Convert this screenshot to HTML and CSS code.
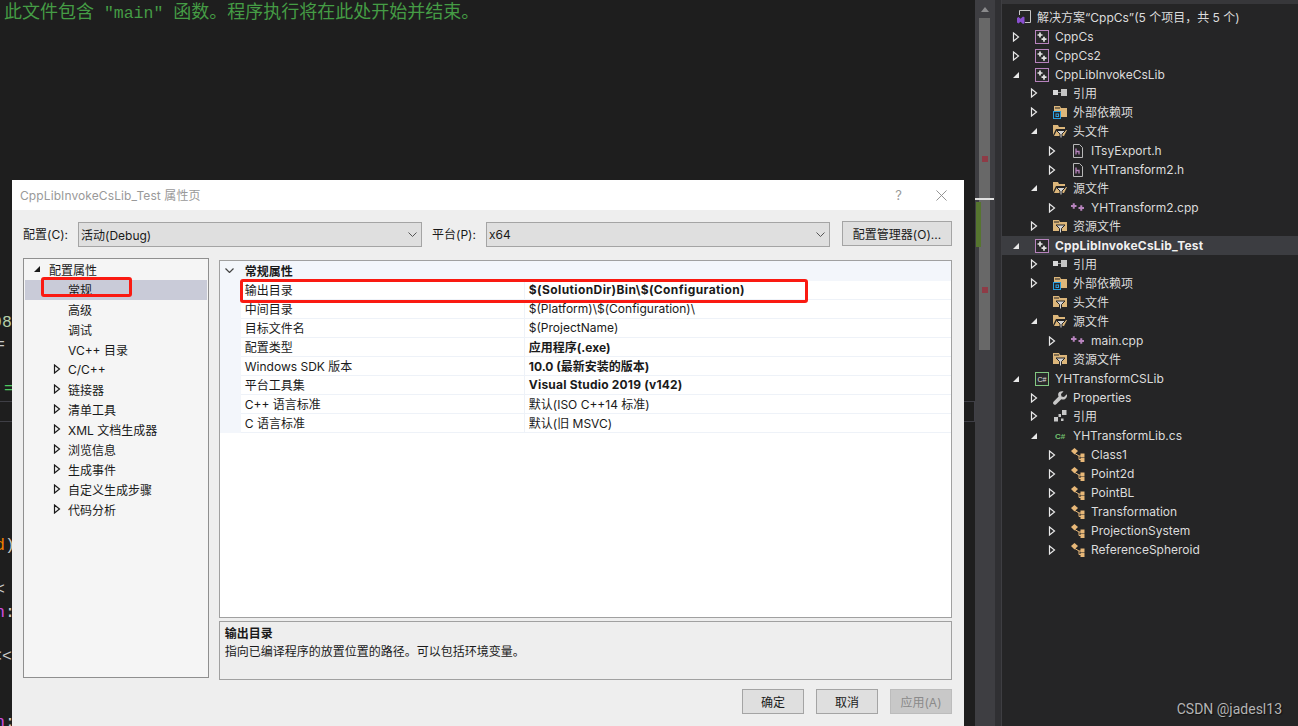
FILE: index.html
```html
<!DOCTYPE html>
<html lang="zh-CN">
<head>
  <meta charset="UTF-8" />
  <title>CppLibInvokeCsLib_Test 属性页</title>
  <link rel="stylesheet" href="styles.css">
</head>
<body>
  <svg class="sprites">
    <symbol id="open" viewBox="0 0 8 10"><path d="M1.5 1v8L6.5 5z" fill="none" stroke="currentColor" stroke-width="1.2"/></symbol>
    <symbol id="shut" viewBox="0 0 8 10"><path d="M7 2v6H1z" fill="currentColor"/></symbol>
    <symbol id="sol" viewBox="0 0 14 14"><path d="M2.5 5V.5h11v12H8" fill="none" stroke="#c8c8c8"/><path d="M0 8l1.5-1 2 1.8L6 6.5 7.5 7.2v6L6 14l-2.500-2.300L1.500 13.500 0 12.500z" fill="#8a4fd0"/></symbol>
    <symbol id="proj" viewBox="0 0 14 14"><rect x=".5" y=".5" width="13" height="13" fill="#2a2a2b" stroke="#b783bd"/><path d="M2.500 5h5M5 2.500v5M6.500 9.200h5M9 6.700v5" stroke="#e4e4e4" stroke-width="1.700"/></symbol>
    <symbol id="ref" viewBox="0 0 14 14"><rect y="4" width="5" height="5" fill="#d8d8d8"/><path d="M5 6.500h3" stroke="#999"/><rect x="8" y="3" width="6" height="7" fill="#c4c4c4"/></symbol>
    <symbol id="dep" viewBox="0 0 14 14"><path d="M1 1h6l1 2h6v9H1z" fill="#dcb67a"/><path d="M2 3h5" stroke="#252526"/><rect x=".5" y="6.500" width="7" height="7" fill="#252526" stroke="#2b9fe0"/><rect x="3" y="9" width="2.500" height="2.500" fill="none" stroke="#2b9fe0"/></symbol>
    <symbol id="filter" viewBox="0 0 14 14"><path d="M0 1h6l1 2h7v9H0z" fill="#dcb67a"/><path d="M1 3h5" stroke="#252526"/><path d="M3 6h9L8.500 9.500V14h-2V9.500z" fill="#d4d4d4" stroke="#252526"/></symbol>
    <symbol id="filter-open" viewBox="0 0 14 14"><path d="M0 1h5l1 2h6v2H3L0 11z" fill="#dcb67a"/><path d="M1 12l3-6h10l-3 6z" fill="#dcb67a"/><path d="M3.500 6.500h9L9 10v4H7v-4z" fill="#d4d4d4" stroke="#252526"/></symbol>
    <symbol id="hfile" viewBox="0 0 14 14"><path d="M2.500.5h6l3 3v10h-9z" fill="none" stroke="#b8b8b8"/><path d="M5 4.500v6M5 7.500h3v3" fill="none" stroke="#b783bd" stroke-width="1.300"/></symbol>
    <symbol id="cpp" viewBox="0 0 14 14"><path d="M0 5h5.500M2.750 2.200v5.600M7.500 7h5.500M10.250 4.200v5.600" stroke="#b783bd" stroke-width="2"/></symbol>
    <symbol id="csproj" viewBox="0 0 14 14"><rect x=".5" y=".5" width="13" height="13" fill="#2a2a2b" stroke="#82c882"/><text x="7" y="10" text-anchor="middle" class="sharp" fill="#e0e0e0">C#</text></symbol>
    <symbol id="wrench" viewBox="0 0 14 14"><path d="M13.500 3.500L11 6 8.500 5.500 8 3l2.500-2.500C8.500-.2 6 .5 5.300 2.600 5 3.700 5.200 4.800 5.600 5.600L.5 10.700c-.8 1-.5 2 .2 2.600.7.700 1.600.8 2.500 0l5.100-5.100c1 .4 2.100.5 3 .2 2-.7 3-2.700 2.700-4.900z" fill="#c8c8c8"/></symbol>
    <symbol id="refs" viewBox="0 0 14 14"><path d="M9 1h4.500v5H9zM5.500 5H8v3H5.500zM1 8h4v4.500H1zM8 9.500h2.500V12H8z" fill="#c8c8c8"/></symbol>
    <symbol id="csfile" viewBox="0 0 14 14"><text x="7" y="10" text-anchor="middle" class="sharp bold" fill="#73c06f">C#</text></symbol>
    <symbol id="cls" viewBox="0 0 14 14"><path d="M3.500 0L7 3 3.500 6.500 0 3z" fill="#e8b878"/><path d="M3 5l5 3h2M8 8v3.500h2" fill="none" stroke="#e8b878"/><rect x="9.500" y="5.500" width="4" height="4" fill="#e8b878"/><rect x="9.500" y="10" width="4" height="4" fill="#e8b878"/></symbol>
  </svg>

  <div class="editor">
    <div class="pane pane-top">
      <div class="line comment"><span class="cjk">此文件包含</span> "main" <span class="cjk">函数。程序执行将在此处开始并结束。</span></div>
      <div class="line"></div><div class="line"></div><div class="line"></div><div class="line"></div>
      <div class="line"></div><div class="line"></div><div class="line"></div><div class="line"></div><div class="line"></div>
      <div class="line"></div><div class="line"></div><div class="line"></div><div class="line"></div>
      <div class="line num"><span class="cut">98</span></div>
      <div class="line plain"><span class="cut-half">=</span></div>
      <div class="line"></div>
      <div class="line green"><span class="nudge">=</span></div>
    </div>
    <div class="pane-split"></div>
    <div class="pane pane-bottom">
      <div class="line"></div><div class="line"></div><div class="line"></div><div class="line"></div><div class="line"></div>
      <div class="line"><span class="cut-half orange">d</span><span class="plain">)</span></div>
      <div class="line"></div>
      <div class="line plain"><span class="cut-half">&lt;</span></div>
      <div class="line"><span class="cut-half magenta">n</span><span class="plain">:</span></div>
      <div class="line"></div>
      <div class="line plain"><span class="cut">&lt;&lt;</span></div>
      <div class="line"></div><div class="line"></div>
      <div class="line"><span class="cut-half magenta">n</span><span class="plain">:</span></div>
    </div>
  </div>

  <div class="scrollbar">
    <div class="scroll-up"></div>
    <div class="scroll-thumb"></div>
    <div class="mark-line"></div>
    <div class="mark-green"></div>
    <div class="mark-red mark-a"></div>
    <div class="mark-red mark-b"></div>
  </div>
  <div class="sash"></div>

  <div class="explorer">
    <div class="row cn"><svg class="ic ic-sol"><use href="#sol"/></svg>解决方案“CppCs”(5 个项目，共 5 个)</div>
    <div class="row lv0"><svg class="exp"><use href="#open"/></svg><svg class="ic"><use href="#proj"/></svg>CppCs</div>
    <div class="row lv0"><svg class="exp"><use href="#open"/></svg><svg class="ic"><use href="#proj"/></svg>CppCs2</div>
    <div class="row lv0"><svg class="exp"><use href="#shut"/></svg><svg class="ic"><use href="#proj"/></svg>CppLibInvokeCsLib</div>
    <div class="row lv1 cn"><svg class="exp"><use href="#open"/></svg><svg class="ic"><use href="#ref"/></svg>引用</div>
    <div class="row lv1 cn"><svg class="exp"><use href="#open"/></svg><svg class="ic"><use href="#dep"/></svg>外部依赖项</div>
    <div class="row lv1 cn"><svg class="exp"><use href="#shut"/></svg><svg class="ic"><use href="#filter-open"/></svg>头文件</div>
    <div class="row lv2"><svg class="exp"><use href="#open"/></svg><svg class="ic"><use href="#hfile"/></svg>ITsyExport.h</div>
    <div class="row lv2"><svg class="exp"><use href="#open"/></svg><svg class="ic"><use href="#hfile"/></svg>YHTransform2.h</div>
    <div class="row lv1 cn"><svg class="exp"><use href="#shut"/></svg><svg class="ic"><use href="#filter-open"/></svg>源文件</div>
    <div class="row lv2"><svg class="exp"><use href="#open"/></svg><svg class="ic"><use href="#cpp"/></svg>YHTransform2.cpp</div>
    <div class="row lv1 cn"><svg class="exp"><use href="#open"/></svg><svg class="ic"><use href="#filter"/></svg>资源文件</div>
    <div class="row lv0 active"><svg class="exp"><use href="#shut"/></svg><svg class="ic"><use href="#proj"/></svg>CppLibInvokeCsLib_Test</div>
    <div class="row lv1 cn"><svg class="exp"><use href="#open"/></svg><svg class="ic"><use href="#ref"/></svg>引用</div>
    <div class="row lv1 cn"><svg class="exp"><use href="#open"/></svg><svg class="ic"><use href="#dep"/></svg>外部依赖项</div>
    <div class="row lv1 cn"><span class="exp"></span><svg class="ic"><use href="#filter"/></svg>头文件</div>
    <div class="row lv1 cn"><svg class="exp"><use href="#shut"/></svg><svg class="ic"><use href="#filter-open"/></svg>源文件</div>
    <div class="row lv2"><svg class="exp"><use href="#open"/></svg><svg class="ic"><use href="#cpp"/></svg>main.cpp</div>
    <div class="row lv1 cn"><span class="exp"></span><svg class="ic"><use href="#filter"/></svg>资源文件</div>
    <div class="row lv0"><svg class="exp"><use href="#shut"/></svg><svg class="ic"><use href="#csproj"/></svg>YHTransformCSLib</div>
    <div class="row lv1"><svg class="exp"><use href="#open"/></svg><svg class="ic"><use href="#wrench"/></svg>Properties</div>
    <div class="row lv1 cn"><svg class="exp"><use href="#open"/></svg><svg class="ic"><use href="#refs"/></svg>引用</div>
    <div class="row lv1"><svg class="exp"><use href="#shut"/></svg><svg class="ic"><use href="#csfile"/></svg>YHTransformLib.cs</div>
    <div class="row lv2"><svg class="exp"><use href="#open"/></svg><svg class="ic"><use href="#cls"/></svg>Class1</div>
    <div class="row lv2"><svg class="exp"><use href="#open"/></svg><svg class="ic"><use href="#cls"/></svg>Point2d</div>
    <div class="row lv2"><svg class="exp"><use href="#open"/></svg><svg class="ic"><use href="#cls"/></svg>PointBL</div>
    <div class="row lv2"><svg class="exp"><use href="#open"/></svg><svg class="ic"><use href="#cls"/></svg>Transformation</div>
    <div class="row lv2"><svg class="exp"><use href="#open"/></svg><svg class="ic"><use href="#cls"/></svg>ProjectionSystem</div>
    <div class="row lv2"><svg class="exp"><use href="#open"/></svg><svg class="ic"><use href="#cls"/></svg>ReferenceSpheroid</div>
  </div>

  <!-- 属性页对话框 -->
  <div class="dialog">
    <div class="titlebar">
      <span class="title">CppLibInvokeCsLib_Test 属性页</span>
      <span class="help">?</span>
      <svg class="close" viewBox="0 0 12 12"><path d="M.5.5l11 11M11.500.5l-11 11" stroke="#8a8a8a" fill="none"/></svg>
    </div>
    <div class="dialog-body">
      <div class="config-row">
        <label class="lbl-config">配置(C):</label>
        <div class="select sel-config">活动(Debug)<svg class="chev" viewBox="0 0 9 5"><path d="M.5.5l4 4 4-4" fill="none" stroke="#555"/></svg></div>
        <label class="lbl-platform">平台(P):</label>
        <div class="select sel-platform">x64<svg class="chev" viewBox="0 0 9 5"><path d="M.5.5l4 4 4-4" fill="none" stroke="#555"/></svg></div>
        <button class="btn btn-manager">配置管理器(O)...</button>
      </div>

      <div class="panes">
        <div class="nav">
          <div class="nav-row nav-root"><svg class="exp"><use href="#shut"/></svg>配置属性</div>
          <div class="nav-row nav-leaf selected">常规</div>
          <div class="nav-row nav-leaf">高级</div>
          <div class="nav-row nav-leaf">调试</div>
          <div class="nav-row nav-leaf">VC++ 目录</div>
          <div class="nav-row nav-sub"><svg class="exp"><use href="#open"/></svg>C/C++</div>
          <div class="nav-row nav-sub"><svg class="exp"><use href="#open"/></svg>链接器</div>
          <div class="nav-row nav-sub"><svg class="exp"><use href="#open"/></svg>清单工具</div>
          <div class="nav-row nav-sub"><svg class="exp"><use href="#open"/></svg>XML 文档生成器</div>
          <div class="nav-row nav-sub"><svg class="exp"><use href="#open"/></svg>浏览信息</div>
          <div class="nav-row nav-sub"><svg class="exp"><use href="#open"/></svg>生成事件</div>
          <div class="nav-row nav-sub"><svg class="exp"><use href="#open"/></svg>自定义生成步骤</div>
          <div class="nav-row nav-sub"><svg class="exp"><use href="#open"/></svg>代码分析</div>
        </div>

        <div class="props-col">
          <div class="props">
            <div class="props-head"><svg class="chev head-chev" viewBox="0 0 9 5"><path d="M.5.5l4 4 4-4" fill="none" stroke="#444" stroke-width="1.200"/></svg>常规属性</div>
            <div class="prop"><span class="prop-name">输出目录</span><span class="prop-val strong val-path">$(SolutionDir)Bin\$(Configuration)</span></div>
            <div class="prop"><span class="prop-name">中间目录</span><span class="prop-val">$(Platform)\$(Configuration)\</span></div>
            <div class="prop"><span class="prop-name">目标文件名</span><span class="prop-val">$(ProjectName)</span></div>
            <div class="prop"><span class="prop-name">配置类型</span><span class="prop-val strong">应用程序(.exe)</span></div>
            <div class="prop"><span class="prop-name">Windows SDK 版本</span><span class="prop-val strong">10.0 (最新安装的版本)</span></div>
            <div class="prop"><span class="prop-name">平台工具集</span><span class="prop-val strong val-tool">Visual Studio 2019 (v142)</span></div>
            <div class="prop"><span class="prop-name">C++ 语言标准</span><span class="prop-val">默认(ISO C++14 标准)</span></div>
            <div class="prop"><span class="prop-name">C 语言标准</span><span class="prop-val">默认(旧 MSVC)</span></div>
          </div>
          <div class="desc">
            <div class="desc-title">输出目录</div>
            <div>指向已编译程序的放置位置的路径。可以包括环境变量。</div>
          </div>
        </div>
      </div>

      <div class="actions">
        <button class="btn">确定</button>
        <button class="btn">取消</button>
        <button class="btn disabled">应用(A)</button>
      </div>
    </div>
    <div class="callout callout-nav"></div>
    <div class="callout callout-prop"></div>
  </div>

  <div class="watermark">CSDN @jadesl13</div>
</body>
</html>
```

FILE: styles.css
```css
* {
  box-sizing: border-box;
}
html, body {
  height: 100%;
}
body {
  margin: 0;
  display: flex;
  overflow: hidden;
  background: #1e1e1e;
  font-family: Inter, "Noto Sans CJK SC", sans-serif;
  font-size: 12px;
}
.sprites {
  display: none;
}
.sharp {
  font-family: "Liberation Sans", sans-serif;
  font-size: 7px;
}
.sharp.bold {
  font-size: 8px;
  font-weight: bold;
}

/* editor behind the dialog */
.editor {
  width: 975px;
  display: flex;
  flex-direction: column;
  background: #1e1e1e;
  font-family: "Liberation Mono", monospace;
  font-size: 16.5px;
}
.pane {
  overflow: hidden;
}
.pane-top {
  height: 401px;
  padding-top: 1px;
}
.pane-split {
  height: 21px;
  border-top: 1px solid #3f3f46;
  border-bottom: 1px solid #3f3f46;
  border-right: 1px solid #3f3f46;
}
.pane-bottom {
  flex: 1;
  padding-top: 2px;
}
.line {
  height: 22.2px;
  line-height: 22.2px;
  white-space: pre;
}
.comment {
  padding-left: 4px;
  color: #459c45;
  line-height: 18px;
}
.cjk {
  font-family: "Noto Sans CJK SC", sans-serif;
  font-size: 18px;
}
.cut {
  margin-left: -8px;
}
.cut-half {
  margin-left: -5px;
}
.nudge {
  margin-left: 4px;
}
.num {
  color: #b5cea8;
}
.plain {
  color: #c8c8c8;
}
.green {
  color: #4ec95f;
}
.orange {
  color: #f08000;
}
.magenta {
  color: #d050e0;
}

/* overview scrollbar */
.scrollbar {
  width: 20px;
  position: relative;
  background: #3e3e42;
  padding: 18px 5px 0 4px;
}
.scroll-up {
  position: absolute;
  top: 7px;
  left: 6px;
  border: 4px solid transparent;
  border-top: 0;
  border-bottom: 5px solid #8a8a8c;
}
.scroll-thumb {
  height: 332px;
  background: #686868;
}
.mark-line {
  position: absolute;
  top: 198px;
  left: 0;
  width: 19px;
  height: 2px;
  background: #e0e0e0;
}
.mark-green {
  position: absolute;
  top: 202px;
  left: 1px;
  width: 5px;
  height: 45px;
  background: #56752f;
}
.mark-red {
  position: absolute;
  left: 7px;
  width: 6px;
  height: 6px;
  background: #8e3b46;
}
.mark-a {
  top: 156px;
}
.mark-b {
  top: 287px;
}
.sash {
  width: 7px;
  background: #303033;
  border-right: 1px solid #3e3e42;
}

/* solution explorer */
.explorer {
  flex: 1;
  background: #252526;
  border-top: 4px solid #37373a;
  padding-top: 4px;
  color: #dcdcdc;
  position: relative;
}
.row {
  height: 19px;
  display: flex;
  align-items: center;
  padding-left: 15px;
  white-space: nowrap;
}
.row.cn {
  padding-bottom: 2px;
}
.row .ic {
  width: 14px;
  height: 14px;
  margin-right: 6px;
  flex: none;
}
.exp {
  width: 8px;
  height: 10px;
  margin-right: 15px;
  flex: none;
  color: #e8e8e8;
}
.lv0 {
  padding-left: 10px;
}
.lv1 {
  padding-left: 28px;
}
.lv2 {
  padding-left: 46px;
}
.active {
  background: #3c3d41;
  font-weight: bold;
  color: #f0f0f0;
  letter-spacing: .2px;
}

/* dialog */
.dialog {
  position: absolute;
  left: 12px;
  top: 180px;
  width: 952px;
  height: 546px;
  display: flex;
  flex-direction: column;
  background: #eeeeee;
  color: #1a1a1a;
}
.titlebar {
  height: 30px;
  flex: none;
  display: flex;
  align-items: center;
  padding: 0 17px 0 8px;
  background: #fff;
}
.title {
  flex: 1;
  padding-bottom: 2px;
  color: #999;
  letter-spacing: .1px;
}
.help {
  margin-right: 34px;
  color: #999;
  font-size: 13px;
}
.close {
  width: 11px;
  height: 11px;
}
.dialog-body {
  flex: 1;
  padding: 11px 12px 0 11px;
}
.config-row {
  height: 25px;
  display: flex;
  align-items: center;
}
.lbl-config {
  width: 55px;
}
.lbl-platform {
  width: 54px;
  margin-left: 10px;
}
.select {
  width: 344px;
  height: 25px;
  margin-top: 1px;
  display: flex;
  align-items: center;
  justify-content: space-between;
  padding: 0 4px 0 2px;
  background: #dfdfdf;
  border: 1px solid #a4a4a4;
}
.chev {
  width: 9px;
  height: 5px;
}
.btn {
  width: 62px;
  height: 25px;
  padding: 0;
  background: #dfdfdf;
  border: 1px solid #a4a4a4;
  font: inherit;
  color: #1a1a1a;
}
.btn-manager {
  width: 110px;
  margin-left: 12px;
}
.disabled {
  background: #c8c8c8;
  border-color: #bcbcbc;
  color: #8a8a8a;
}
.panes {
  display: flex;
  gap: 10px;
  margin-top: 12px;
}
.nav {
  width: 186px;
  height: 420px;
  padding: 1px;
  background: #f5f5f5;
  border: 1px solid #8f8f8f;
}
.nav-row {
  height: 20px;
  padding-bottom: 2px;
  display: flex;
  align-items: center;
}
.nav-row .exp {
  color: #1a1a1a;
}
.nav-root {
  padding-left: 8px;
}
.nav-root .exp {
  margin-right: 8px;
}
.nav-leaf {
  padding-left: 43px;
}
.nav-sub {
  padding-left: 28px;
}
.nav-sub .exp {
  margin-right: 7px;
}
.selected {
  background: #c9cbd8;
}
.props-col {
  width: 734px;
  margin-top: 2px;
  display: flex;
  flex-direction: column;
  gap: 3px;
}
.props {
  height: 358px;
  background: #fff;
  border: 1px solid #a0a0a0;
}
.props-head {
  height: 20px;
  padding-bottom: 2px;
  display: flex;
  align-items: center;
  padding-left: 5px;
  background: #f3f6fb;
  font-weight: bold;
}
.head-chev {
  margin-right: 11px;
}
.prop {
  height: 19px;
  display: flex;
  align-items: center;
  margin-left: 21px;
  box-shadow: -21px 0 0 #f3f6fb;
  border-bottom: 1px solid #eef2f8;
}
.prop-name {
  width: 284px;
  height: 100%;
  padding: 0 0 1px 4px;
  display: flex;
  align-items: center;
  border-right: 1px solid #eef2f8;
}
.prop-val {
  padding: 0 0 1px 4px;
}
.strong {
  font-weight: bold;
}
.val-path {
  letter-spacing: .4px;
}
.val-tool {
  letter-spacing: .2px;
}
.desc {
  height: 59px;
  padding: 3px 5px;
  border: 1px solid #a0a0a0;
  line-height: 18px;
}
.desc-title {
  font-weight: bold;
}
.actions {
  display: flex;
  justify-content: flex-end;
  gap: 12px;
  margin-top: 9px;
}

/* red annotation boxes drawn on the screenshot */
.callout {
  position: absolute;
  border: 3px solid #fa1a12;
  border-radius: 3px;
}
.callout-nav {
  left: 29px;
  top: 97px;
  width: 91px;
  height: 20px;
}
.callout-prop {
  left: 228px;
  top: 99px;
  width: 568px;
  height: 24px;
}
.watermark {
  position: absolute;
  right: 16px;
  bottom: 9px;
  color: #b4b4b4;
  font-family: Roboto, sans-serif;
  font-size: 14px;
  text-shadow: 1px 1px 1px #111;
}
```
